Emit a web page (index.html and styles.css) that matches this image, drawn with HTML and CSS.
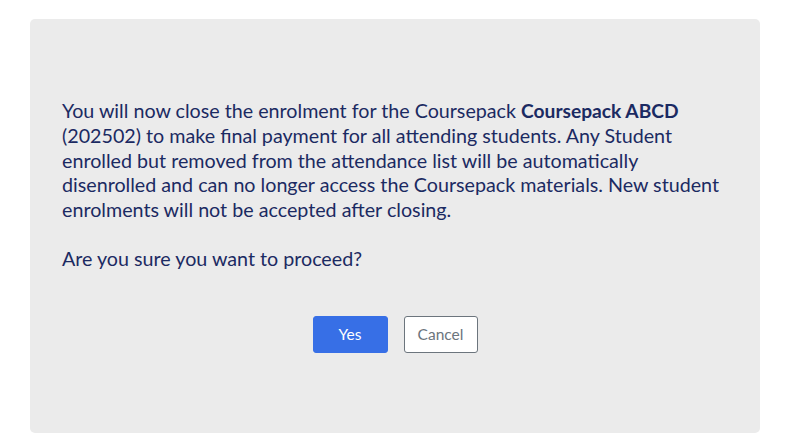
FILE: index.html
```html
<!DOCTYPE html>
<html lang="en">
<head>
    <meta charset="UTF-8">
    <meta name="viewport" content="width=device-width, initial-scale=1.0">
    <title>Close Enrolment</title>
    <link rel="stylesheet" href="styles.css">
</head>
<body>
    <div class="confirm-panel">
        <div class="confirm-body">
            <p class="message">
                You will now close the enrolment for the Coursepack <strong>Coursepack ABCD</strong>
                (202502) to make final payment for all attending students. Any Student
                enrolled but removed from the attendance list will be automatically
                disenrolled and can no longer access the Coursepack materials. New student
                enrolments will not be accepted after closing.
                <br><br>
                Are you sure you want to proceed?
            </p>
            <div class="actions">
                <button class="btn btn-yes">Yes</button>
                <button class="btn btn-cancel">Cancel</button>
            </div>
        </div>
    </div>
</body>
</html>
```

FILE: styles.css
```css
body {
    margin: 0;
    font-family: 'Lato', 'Liberation Sans', sans-serif;
    background-color: #fff;
    color: #1b2a62;
}

.confirm-panel {
    margin: 19px 51px 9px 30px;
    height: 414px;
    background-color: #ebebeb;
    border-radius: 5px;
    display: flex;
    align-items: center;
}

.confirm-body {
    padding: 0 32px;
}

.message {
    margin: 0 0 44px;
    font-size: 19.7px;
    line-height: 24.6px;
}

.message strong {
    font-weight: 700;
    font-size: 19.2px;
}

.actions {
    display: flex;
    justify-content: center;
    gap: 16px;
}

.btn {
    font-family: inherit;
    font-size: 15.5px;
    height: 37px;
    border-radius: 3px;
    cursor: pointer;
}

.btn-yes {
    width: 75px;
    background-color: #376fe6;
    border: 1px solid #376fe6;
    color: #fff;
}

.btn-cancel {
    width: 74px;
    background-color: #fff;
    border: 1px solid #6c757d;
    color: #6c757d;
}
```
